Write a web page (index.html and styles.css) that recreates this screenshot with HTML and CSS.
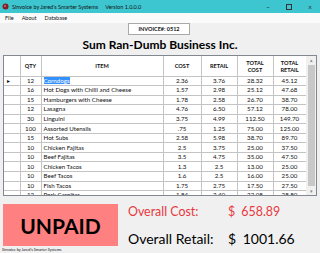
FILE: index.html
```html
<!DOCTYPE html>
<html lang="en">
<head>
  <meta charset="UTF-8" />
  <title>Sinvoice by Jared's Smarter Systems</title>
  <link rel="stylesheet" href="styles.css">
</head>
<body>

<div class="titlebar">
  <svg class="appIcon" width="7" height="7" viewBox="0 0 7 7"><circle cx="3.5" cy="3.5" r="3" fill="#7a1f24"/><circle cx="3" cy="3" r="1.2" fill="#c25a5e"/></svg>
  <span class="appName">Sinvoice by Jared's Smarter Systems</span>
  <span class="version">Version 1.0.0.0</span>
  <div class="winControls">
    <span>&#8211;</span>
    <span class="box"></span>
    <span>&#215;</span>
  </div>
</div>

<div class="menubar">
  <span>File</span>
  <span>About</span>
  <span>Database</span>
</div>

<div class="invoiceNo">INVOICE#: 0512</div>
<h1 class="company">Sum Ran-Dumb Business Inc.</h1>

<div class="grid">
  <div class="gridBody">
    <table id="invoiceTable">
      <colgroup>
        <col style="width:16px"><col style="width:21px"><col style="width:122px">
        <col style="width:38px"><col style="width:36px"><col style="width:36px"><col style="width:33px">
      </colgroup>
      <thead>
        <tr>
          <th></th>
          <th>QTY</th>
          <th>ITEM</th>
          <th>COST</th>
          <th>RETAIL</th>
          <th>TOTAL<br>COST</th>
          <th>TOTAL<br>RETAIL</th>
        </tr>
      </thead>
      <tbody>
        <tr><td class="rowHead">&#9656;</td><td>12</td><td class="item"><span class="sel">Corndogs</span></td><td>2.36</td><td>3.76</td><td>28.32</td><td>45.12</td></tr>
        <tr><td class="rowHead"></td><td>16</td><td class="item">Hot Dogs with Chilli and Cheese</td><td>1.57</td><td>2.98</td><td>25.12</td><td>47.68</td></tr>
        <tr><td class="rowHead"></td><td>15</td><td class="item">Hamburgers with Cheese</td><td>1.78</td><td>2.58</td><td>26.70</td><td>38.70</td></tr>
        <tr><td class="rowHead"></td><td>12</td><td class="item">Lasagna</td><td>4.76</td><td>6.50</td><td>57.12</td><td>78.00</td></tr>
        <tr><td class="rowHead"></td><td>30</td><td class="item">Linguini</td><td>3.75</td><td>4.99</td><td>112.50</td><td>149.70</td></tr>
        <tr><td class="rowHead"></td><td>100</td><td class="item">Assorted Utensils</td><td>.75</td><td>1.25</td><td>75.00</td><td>125.00</td></tr>
        <tr><td class="rowHead"></td><td>15</td><td class="item">Hot Subs</td><td>2.58</td><td>5.98</td><td>38.70</td><td>89.70</td></tr>
        <tr><td class="rowHead"></td><td>10</td><td class="item">Chicken Fajitas</td><td>2.5</td><td>3.75</td><td>25.00</td><td>37.50</td></tr>
        <tr><td class="rowHead"></td><td>10</td><td class="item">Beef Fajitas</td><td>3.5</td><td>4.75</td><td>35.00</td><td>47.50</td></tr>
        <tr><td class="rowHead"></td><td>10</td><td class="item">Chicken Tacos</td><td>1.3</td><td>2.5</td><td>13.00</td><td>25.00</td></tr>
        <tr><td class="rowHead"></td><td>10</td><td class="item">Beef Tacos</td><td>1.6</td><td>2.5</td><td>16.00</td><td>25.00</td></tr>
        <tr><td class="rowHead"></td><td>10</td><td class="item">Fish Tacos</td><td>1.75</td><td>2.75</td><td>17.50</td><td>27.50</td></tr>
        <tr><td class="rowHead"></td><td>12</td><td class="item">Pork Carnitas</td><td>1.84</td><td>2.40</td><td>22.08</td><td>28.80</td></tr>
      </tbody>
    </table>
  </div>
  <div class="scrollbar">
    <span class="arrow">&#9652;</span>
    <div class="thumb"></div>
    <span class="arrow">&#9662;</span>
  </div>
</div>

<div class="bottom">
  <div class="leftCol">
    <div class="status">UNPAID</div>
    <div class="footNote">Sinvoice by Jared's Smarter Systems</div>
  </div>
  <div class="totals">
    <span class="label cost">Overall Cost:</span>
    <span class="amount cost">$ 658.89</span>
    <span class="label retail">Overall Retail:</span>
    <span class="amount retail">$ 1001.66</span>
  </div>
</div>

</body>
</html>
```

FILE: styles.css
```css
body {
  margin: 0;
  width: 320px;
  height: 253px;
  overflow: hidden;
  background-color: #f0f0f0;
  font-family: Lato, "Open Sans", sans-serif;
  color: #111;
}
.titlebar {
  height: 13px;
  background-color: #3ec6d0;
  display: flex;
  align-items: center;
  padding-left: 2px;
  font-size: 5.5px;
}
.appName {
  margin-left: 3px;
}
.version {
  margin-left: 7px;
}
.winControls {
  margin-left: auto;
  display: flex;
  align-items: center;
}
.winControls span {
  width: 20px;
  text-align: center;
  font-size: 7px;
  color: #333;
}
.winControls .box {
  width: 4px;
  height: 4px;
  border: 1px solid #333;
  margin: 0 8px;
}
.menubar {
  height: 10px;
  background-color: #fafafa;
  display: flex;
  align-items: center;
  gap: 8px;
  padding-left: 5px;
  font-size: 5.5px;
}
.invoiceNo {
  width: 60px;
  height: 10px;
  margin-left: 128px;
  background: white;
  border: 1px solid #a9a9a9;
  font-size: 5.5px;
  font-weight: bold;
  display: flex;
  align-items: center;
  justify-content: center;
}
.company {
  margin: 0;
  height: 20px;
  line-height: 19px;
  text-align: center;
  font-size: 12px;
  font-weight: bold;
  color: #000;
}
.grid {
  margin: 0 3px;
  height: 139px;
  border: 1px solid #828790;
  background: white;
  display: flex;
  overflow: hidden;
}
.gridBody {
  flex: 1;
  overflow: hidden;
}
table {
  width: 302px;
  table-layout: fixed;
  border-collapse: collapse;
  font-size: 6.2px;
}
th, td {
  border: 1px solid #c4c4c4;
  padding: 0;
  text-align: center;
  white-space: nowrap;
  overflow: hidden;
}
tr:first-child th {
  border-top: none;
}
th:first-child, td:first-child {
  border-left: none;
}
thead tr {
  height: 20px;
}
th {
  font-size: 5.6px;
  font-weight: bold;
  line-height: 7px;
}
tbody tr {
  height: 9.55px;
}
td {
  line-height: 8px;
}
td.item {
  text-align: left;
  padding-left: 2px;
}
.rowHead {
  font-size: 6px;
  text-align: left;
  padding-left: 3px;
}
.sel {
  background-color: #3390ff;
  color: white;
}
.scrollbar {
  width: 10px;
  background-color: #f0f0f0;
  display: flex;
  flex-direction: column;
  align-items: center;
}
.arrow {
  height: 8px;
  font-size: 5px;
  line-height: 8px;
  color: #888;
}
.thumb {
  flex: 1;
  width: 7px;
  margin: 1px 0;
  background-color: #c8c8c8;
}
.bottom {
  display: flex;
  padding-left: 3px;
  margin-top: 8px;
}
.status {
  width: 115px;
  height: 42px;
  background-color: #ff8080;
  display: flex;
  align-items: center;
  justify-content: center;
  font-size: 21px;
  font-weight: bold;
  color: #000;
}
.footNote {
  font-size: 3.8px;
  margin: 1px 0 0 -1px;
}
.totals {
  margin-left: 10px;
  display: grid;
  grid-template-columns: 100px auto;
  grid-template-rows: 15px 22px;
  row-gap: 8px;
  align-items: center;
}
.cost {
  color: #e8383d;
  font-size: 12.4px;
}
.retail {
  color: #000;
  font-size: 14px;
}
.amount {
  word-spacing: 3px;
}
```
